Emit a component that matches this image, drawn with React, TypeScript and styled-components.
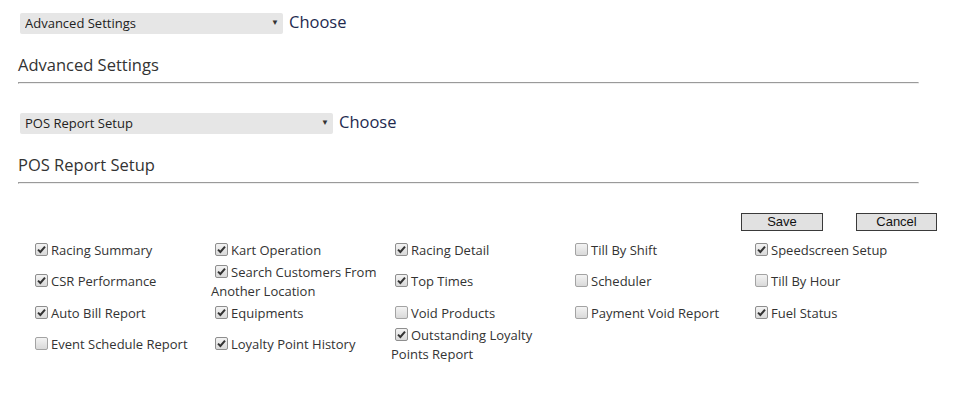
import styled, { createGlobalStyle } from "styled-components";

const GlobalStyle = createGlobalStyle`
  body {
    margin: 0;
    background: #fff;
    font-family: "Open Sans", "Noto Sans", sans-serif;
    color: #333;
  }
`;

const Page = styled.div`
  padding: 11px 35px 40px 18px;
`;

const Section = styled.section`
  margin-bottom: 27px;
`;

const SelectRow = styled.div`
  display: flex;
  align-items: center;
  height: 21px;
  margin-left: 2px;
`;

const SelectWrap = styled.div<{ w: number }>`
  position: relative;
  width: ${(p) => p.w}px;
  height: 21px;
`;

const Select = styled.select`
  appearance: none;
  width: 100%;
  height: 100%;
  border: none;
  border-radius: 2px;
  background: #e6e6e6;
  padding: 0 0 0 5px;
  font-family: "Open Sans", sans-serif;
  font-size: 13px;
  color: #222;
  outline: none;
`;

const Arrow = styled.span`
  position: absolute;
  right: 4px;
  top: 5px;
  font-size: 8px;
  color: #333;
  pointer-events: none;
`;

const Choose = styled.span`
  margin-left: 6px;
  font-size: 16.5px;
  color: #1e2a4f;
`;

const Heading = styled.h3`
  margin: 23px 0 7px;
  font-size: 16.5px;
  font-weight: 400;
  line-height: 20px;
  color: #333;
`;

const Rule = styled.hr`
  margin: 0;
  border-style: solid;
  border-width: 1px;
  border-color: #9a9a9a #eee #eee #9a9a9a;
  height: 0;
`;

const Actions = styled.div`
  display: flex;
  justify-content: flex-end;
  gap: 33px;
  padding-top: 2px;
  margin-right: -18px;
`;

const Button = styled.button<{ w: number }>`
  width: ${(p) => p.w}px;
  height: 18px;
  padding: 0;
  background: #e1e1e1;
  border: 1px solid #3a3a3a;
  font-family: "Liberation Sans", Arial, sans-serif;
  font-size: 13px;
  line-height: 16px;
  color: #111;
`;

const Grid = styled.div`
  display: grid;
  grid-template-columns: repeat(5, 180px);
  grid-auto-rows: 31.3px;
  margin: 4px 0 0 13px;
`;

const Cell = styled.label`
  display: flex;
  align-items: center;
  font-size: 13px;
  line-height: 19px;
  color: #333;
`;

const CellText = styled.span`
  display: block;
`;

const Box = styled.span<{ on: boolean }>`
  display: inline-block;
  vertical-align: -1px;
  box-sizing: border-box;
  width: 13px;
  height: 13px;
  margin: 0 3px 0 4px;
  border: 1px solid ${(p) => (p.on ? "#8e8e8e" : "#a3a3a3")};
  border-radius: 2px;
  background: linear-gradient(#f3f3f3, #d9d9d9);
  position: relative;

  svg {
    position: absolute;
    left: 1px;
    top: 1px;
  }
`;

function CheckBox({ on }: { on: boolean }) {
  return (
    <Box on={on}>
      {on && (
        <svg width="9" height="9" viewBox="0 0 9 9">
          <path d="M1 4.6 L3.4 7 L8 1.6" fill="none" stroke="#333" strokeWidth="2" />
        </svg>
      )}
    </Box>
  );
}

const items: [string, boolean][] = [
  ["Racing Summary", true],
  ["Kart Operation", true],
  ["Racing Detail", true],
  ["Till By Shift", false],
  ["Speedscreen Setup", true],
  ["CSR Performance", true],
  ["Search Customers From Another Location", true],
  ["Top Times", true],
  ["Scheduler", false],
  ["Till By Hour", false],
  ["Auto Bill Report", true],
  ["Equipments", true],
  ["Void Products", false],
  ["Payment Void Report", false],
  ["Fuel Status", true],
  ["Event Schedule Report", false],
  ["Loyalty Point History", true],
  ["Outstanding Loyalty Points Report", true],
];

function SelectSection({ value, width }: { value: string; width: number }) {
  return (
    <Section>
      <SelectRow>
        <SelectWrap w={width}>
          <Select defaultValue={value}>
            <option>{value}</option>
          </Select>
          <Arrow>▼</Arrow>
        </SelectWrap>
        <Choose>Choose</Choose>
      </SelectRow>
      <Heading>{value}</Heading>
      <Rule />
    </Section>
  );
}

function App() {
  return (
    <Page>
      <GlobalStyle />
      <SelectSection value="Advanced Settings" width={263} />
      <SelectSection value="POS Report Setup" width={313} />
      <Actions>
        <Button w={82}>Save</Button>
        <Button w={81}>Cancel</Button>
      </Actions>
      <Grid>
        {items.map(([label, on]) => (
          <Cell key={label}>
            <CellText>
              <CheckBox on={on} />
              {label}
            </CellText>
          </Cell>
        ))}
      </Grid>
    </Page>
  );
}

export default App;
